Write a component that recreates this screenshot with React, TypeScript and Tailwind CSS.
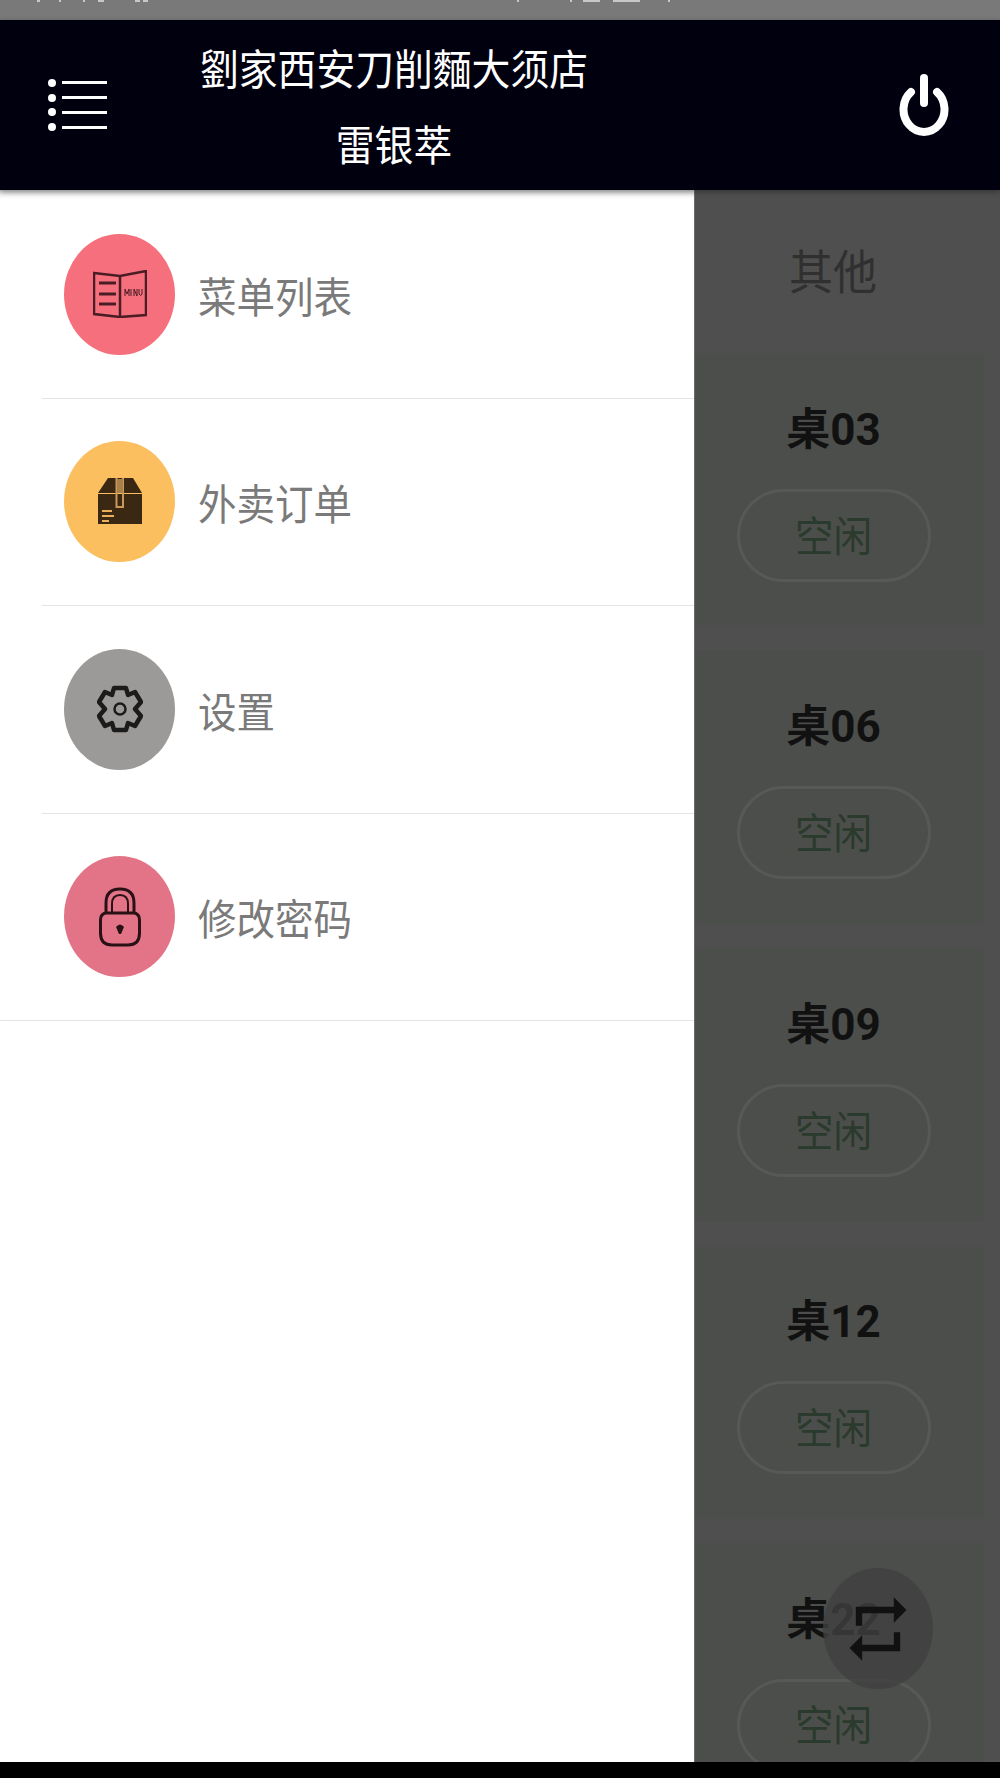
import { MdRepeat } from 'react-icons/md';
import type { ReactNode } from 'react';

const cjk = "font-['Roboto','Noto_Sans_CJK_SC',sans-serif]";

const BookIcon = () => (
  <svg width="54" height="48" viewBox="0 0 54 48" fill="none" stroke="#4a1c24" strokeWidth="2.5">
    <path d="M1 3 L27 6 L53 1 V45 L27 47 L1 44 Z" />
    <path d="M27 6 V47" />
    <path d="M6 13 H23 M6 24 H23 M6 34 H23" strokeWidth="3" />
    <path d="M32 26 V19 L34 24 L36 19 V26 M38 19 V26 M41 26 V19 L44 26 V19 M46 19 V24 Q48 27 49 24 V19" strokeWidth="1" />
  </svg>
);

const BoxIcon = () => (
  <svg width="44" height="47" viewBox="0 0 44 47">
    <path d="M10 0 H35 L44 15 H0 Z" fill="#3a2812" />
    <path d="M0 16 H44 V46 H0 Z" fill="#3a2812" />
    <path d="M18.5 0 V29 H25 V0" fill="none" stroke="#c9985a" strokeWidth="2" />
    <path d="M19 1 H25 V15 H19 Z" fill="#a8804a" />
    <path d="M4 33 H14 M4 38 H16 M4 43 H11" stroke="#e9b15a" strokeWidth="2" />
  </svg>
);

const GearIcon = () => (
  <svg width="46" height="48" viewBox="0 0 46 48" fill="none" stroke="#1b1b1b" strokeWidth="4.5" strokeLinejoin="round">
    <path d="M17 3 H29 L31 10 L38 7 L44 17 L38 24 L44 31 L38 41 L31 38 L29 45 H17 L15 38 L8 41 L2 31 L8 24 L2 17 L8 7 L15 10 Z" />
    <circle cx="23" cy="24" r="5.5" strokeWidth="2.5" />
  </svg>
);

const LockIcon = () => (
  <svg width="42" height="60" viewBox="0 0 42 60" fill="none" stroke="#2a1116" strokeWidth="3">
    <path d="M1.5 33 Q1.5 26 8 26 H34 Q40.5 26 40.5 33 V46 Q40.5 58 29 58 H13 Q1.5 58 1.5 46 Z" />
    <path d="M7 26 V16 Q7 2 21 2 Q35 2 35 16 V26" />
    <path d="M13 26 V17 Q13 8 21 8 Q29 8 29 17 V26" strokeWidth="2" />
    <path d="M17 40 Q21 35 25 40 L22 47 H20 Z" fill="#2a1116" stroke="none" />
  </svg>
);

interface IMenuRowProps {
  title: string;
  color: string;
  icon: ReactNode;
  border: string;
}

const MenuRow = ({ title, color, icon, border }: IMenuRowProps) => (
  <div className={`h-[207.5px] flex items-center border-b border-[#e4e4e4] ${border}`}>
    <div className={`h-[121px] w-[111px] shrink-0 rounded-[50%] flex justify-center items-center ${color}`}>
      {icon}
    </div>
    <span className={`ml-[23px] mt-[9px] text-[38.5px] leading-none scale-y-[1.09] text-[#7a7a7a] ${cjk}`}>
      {title}
    </span>
  </div>
);

const TableCard = ({ name }: { name: string }) => (
  <div className="h-[274px] mb-[23.4px] w-[289px] shrink-0 flex flex-col items-center pt-[52px] pr-[12px] bg-[#4c4e4b]">
    <p className={`text-[44px] leading-[50px] font-bold text-[#111111] ${cjk}`}>{name}</p>
    <div className="mt-[34px] h-[93px] w-[194px] shrink-0 rounded-full border-[3px] border-[#565956] flex justify-center items-center">
      <span className={`mt-[5px] text-[38.5px] leading-none scale-y-[1.09] text-[#2a3a2c] ${cjk}`}>空闲</span>
    </div>
  </div>
);

const specks = [
  'left-[37px] w-[3px]',
  'left-[59px] w-[2px]',
  'left-[83px] w-[2px]',
  'left-[98px] w-[6px]',
  'left-[135px] w-[5px]',
  'left-[143px] w-[5px]',
  'left-[517px] w-[2px]',
  'left-[570px] w-[2px]',
  'left-[583px] w-[17px]',
  'left-[613px] w-[27px]',
  'left-[668px] w-[2px]',
];

export default function App() {
  return (
    <div className="relative h-[1778px] w-[1000px] flex flex-col overflow-hidden bg-black">
      {/* status bar, only the feet of its text show */}
      <div className="relative h-5 shrink-0 overflow-hidden bg-[#797979]">
        {specks.map((speck) => (
          <div key={speck} className={`absolute top-0 h-[2px] bg-[#c8c8c8] ${speck}`} />
        ))}
      </div>

      {/* header */}
      <div className="h-[170px] shrink-0 flex items-center bg-[#00000f] relative z-10 shadow-[0_2px_6px_rgba(0,0,0,0.35)]">
        <div className="w-[197px] pl-[48px] shrink-0">
          <div className="w-[59px] flex flex-col gap-[6.7px]">
            {[0, 1, 2, 3].map((i) => (
              <div key={i} className="flex items-center gap-[6px]">
                <div className="h-[8px] w-[8px] rounded-full bg-white" />
                <div className="h-[3px] flex-1 bg-white" />
              </div>
            ))}
          </div>
        </div>
        <div className={`w-[394px] pt-[8px] flex flex-col items-center text-white text-[38.8px] leading-none ${cjk}`}>
          <span className="scale-y-[1.09] whitespace-nowrap">劉家西安刀削麵大须店</span>
          <span className="scale-y-[1.09] mt-[37px]">雷银萃</span>
        </div>
        <div className="ml-auto mr-[51px]">
          <svg width="50" height="64" viewBox="0 0 50 64" fill="none" stroke="#ffffff" strokeLinecap="round">
            <path d="M12 19 A20.5 22.5 0 1 0 38 19" strokeWidth="8" />
            <path d="M25 5 V30" strokeWidth="8" />
          </svg>
        </div>
      </div>

      <div className="flex-1 min-h-0 flex overflow-hidden">
        {/* drawer */}
        <div className="w-[695px] shrink-0 pt-px bg-white shadow-[inset_0_8px_6px_-6px_rgba(0,0,0,0.25)] border-r border-[#6b6b6b]">
          <MenuRow title="菜单列表" color="bg-[#f5707c]" icon={<BookIcon />} border="ml-[42px] pl-[22px]" />
          <MenuRow title="外卖订单" color="bg-[#fbbf5f]" icon={<BoxIcon />} border="ml-[42px] pl-[22px]" />
          <MenuRow title="设置" color="bg-[#9b9a98]" icon={<GearIcon />} border="ml-[42px] pl-[22px]" />
          <MenuRow title="修改密码" color="bg-[#e37487]" icon={<LockIcon />} border="pl-[64px]" />
        </div>

        {/* dimmed table list */}
        <div className="flex-1 flex flex-col overflow-hidden bg-[#4f4f4f]">
          <div className="h-[163px] w-[276px] shrink-0 flex justify-center items-start pt-[61px]">
            <span className={`text-[44px] leading-none scale-y-[1.05] text-[#303030] ${cjk}`}>其他</span>
          </div>
          <TableCard name="桌03" />
          <TableCard name="桌06" />
          <TableCard name="桌09" />
          <TableCard name="桌12" />
          <TableCard name="桌22" />
        </div>
      </div>

      <div className="h-4 shrink-0 bg-black relative z-10" />

      <div className="absolute left-[823px] top-[1568px] h-[121px] w-[110px] rounded-[50%] bg-[#404040]/80 flex justify-center items-center z-10">
        <MdRepeat size={76} color="#111111" />
      </div>
    </div>
  );
}
